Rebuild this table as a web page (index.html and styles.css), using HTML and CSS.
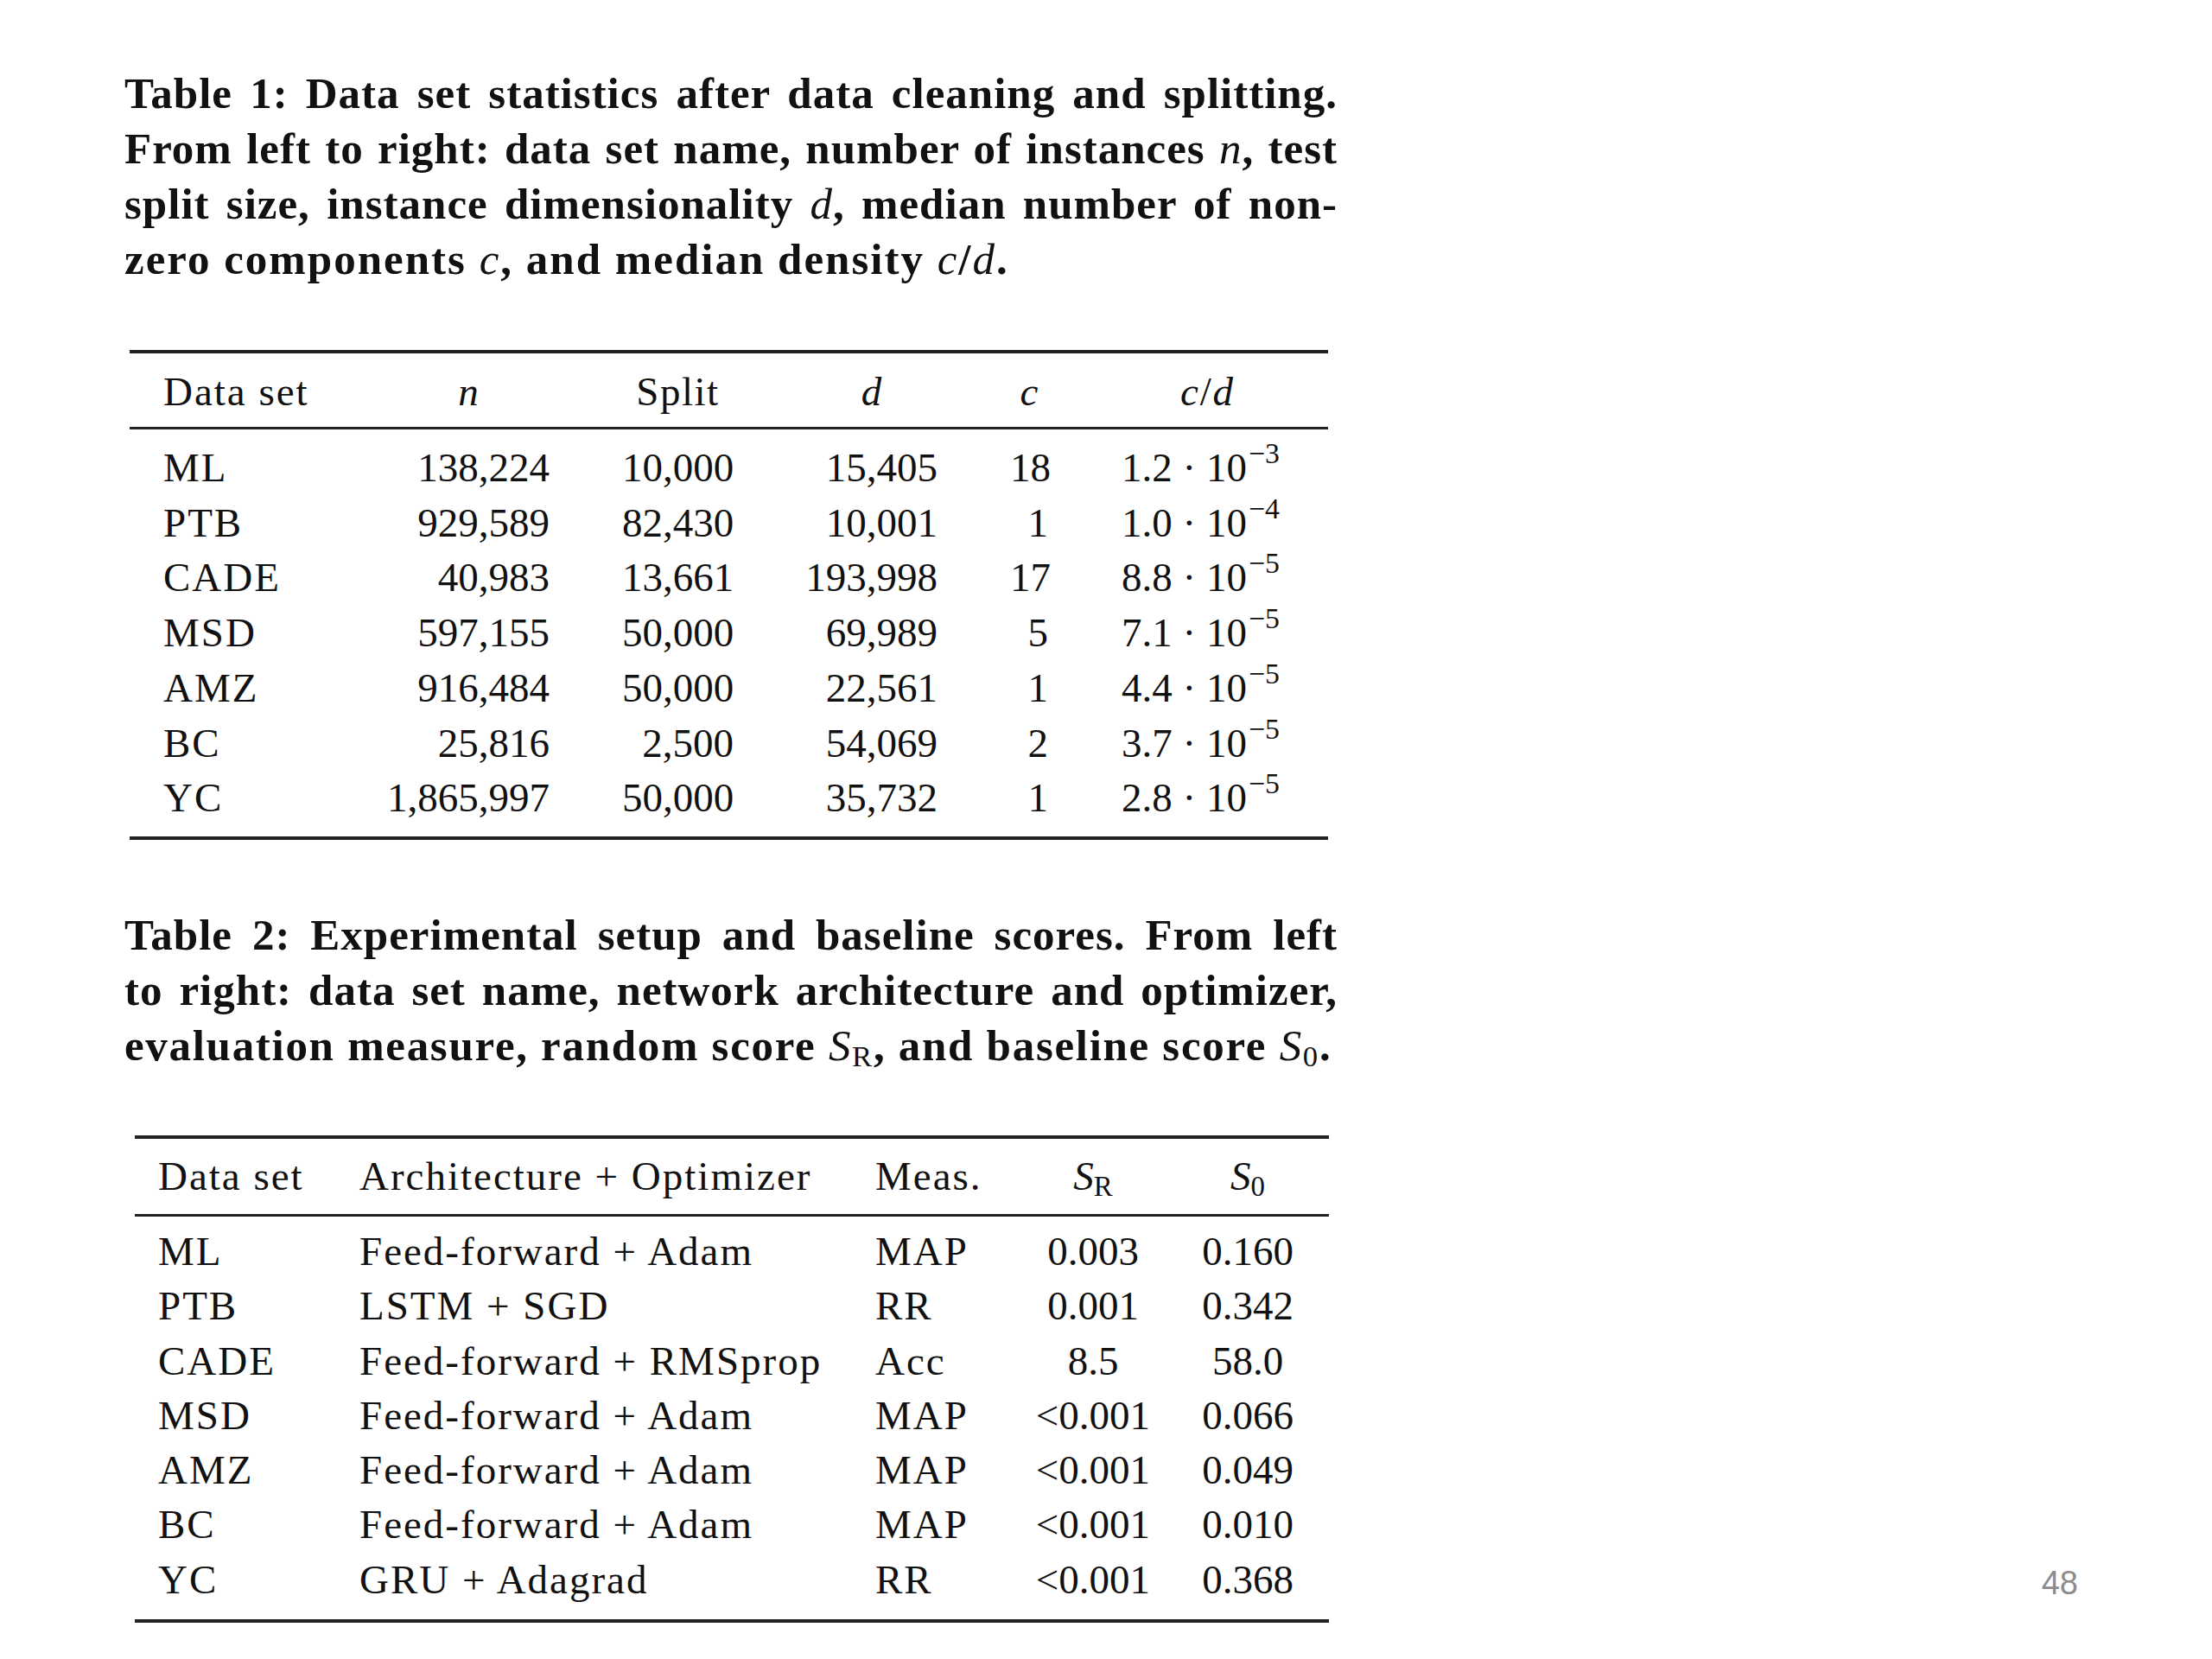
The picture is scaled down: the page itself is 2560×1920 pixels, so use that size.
FILE: index.html
```html
<!DOCTYPE html>
<html lang="en">
<head>
<meta charset="utf-8">
<title>Slide 48</title>
<link rel="stylesheet" href="styles.css">
</head>
<body>
<div class="slide">
  <main class="content">
    <p class="caption cap1">
      <span class="ln">Table 1: Data set statistics after data cleaning and splitting.</span>
      <span class="ln">From left to right: data set name, number of instances <i class="m">n</i>, test</span>
      <span class="ln">split size, instance dimensionality <i class="m">d</i>, median number of non-</span>
      <span class="ln last">zero components <i class="m">c</i>, and median density <i class="m">c</i>/<i class="m">d</i>.</span>
    </p>
    <table class="tbl t1">
      <thead>
        <tr><th>Data set</th><th><i>n</i></th><th>Split</th><th><i>d</i></th><th><i>c</i></th><th><i>c</i> / <i>d</i></th></tr>
      </thead>
      <tbody>
        <tr class="first"><td>ML</td><td>138,224</td><td>10,000</td><td>15,405</td><td>18</td><td>1.2 · 10<sup>−3</sup></td></tr>
        <tr><td>PTB</td><td>929,589</td><td>82,430</td><td>10,001</td><td>1</td><td>1.0 · 10<sup>−4</sup></td></tr>
        <tr><td>CADE</td><td>40,983</td><td>13,661</td><td>193,998</td><td>17</td><td>8.8 · 10<sup>−5</sup></td></tr>
        <tr><td>MSD</td><td>597,155</td><td>50,000</td><td>69,989</td><td>5</td><td>7.1 · 10<sup>−5</sup></td></tr>
        <tr><td>AMZ</td><td>916,484</td><td>50,000</td><td>22,561</td><td>1</td><td>4.4 · 10<sup>−5</sup></td></tr>
        <tr><td>BC</td><td>25,816</td><td>2,500</td><td>54,069</td><td>2</td><td>3.7 · 10<sup>−5</sup></td></tr>
        <tr class="last"><td>YC</td><td>1,865,997</td><td>50,000</td><td>35,732</td><td>1</td><td>2.8 · 10<sup>−5</sup></td></tr>
      </tbody>
    </table>
    <p class="caption cap2">
      <span class="ln">Table 2: Experimental setup and baseline scores. From left</span>
      <span class="ln">to right: data set name, network architecture and optimizer,</span>
      <span class="ln last">evaluation measure, random score <i class="m">S</i><sub>R</sub>, and baseline score <i class="m">S</i><sub>0</sub>.</span>
    </p>
    <table class="tbl t2">
      <thead>
        <tr><th>Data set</th><th>Architecture + Optimizer</th><th>Meas.</th><th><i>S</i><sub>R</sub></th><th><i>S</i><sub>0</sub></th></tr>
      </thead>
      <tbody>
        <tr class="first"><td>ML</td><td>Feed-forward + Adam</td><td>MAP</td><td>0.003</td><td>0.160</td></tr>
        <tr><td>PTB</td><td>LSTM + SGD</td><td>RR</td><td>0.001</td><td>0.342</td></tr>
        <tr><td>CADE</td><td>Feed-forward + RMSprop</td><td>Acc</td><td>8.5</td><td>58.0</td></tr>
        <tr><td>MSD</td><td>Feed-forward + Adam</td><td>MAP</td><td>&lt;0.001</td><td>0.066</td></tr>
        <tr><td>AMZ</td><td>Feed-forward + Adam</td><td>MAP</td><td>&lt;0.001</td><td>0.049</td></tr>
        <tr><td>BC</td><td>Feed-forward + Adam</td><td>MAP</td><td>&lt;0.001</td><td>0.010</td></tr>
        <tr class="last"><td>YC</td><td>GRU + Adagrad</td><td>RR</td><td>&lt;0.001</td><td>0.368</td></tr>
      </tbody>
    </table>
  </main>
  <div class="pagenum">48</div>
</div>
</body>
</html>
```
FILE: styles.css
```css
html, body {
  margin: 0;
  padding: 0;
  background: #ffffff;
}

.slide {
  width: 2560px;
  height: 1920px;
  box-sizing: border-box;
  padding: 76px 155px 0 144px;
  display: flex;
  color: #111111;
}

.content {
  width: 1404px;
  display: flex;
  flex-direction: column;
  align-items: flex-start;
}

.caption {
  margin: 0;
  width: 1404px;
  font-family: "Liberation Serif", "Times New Roman", serif;
  font-weight: bold;
  font-size: 51px;
  line-height: 64px;
  letter-spacing: 1px;
}

.caption .ln {
  display: block;
  text-align: justify;
  text-align-last: justify;
}

.caption .ln.last {
  text-align-last: left;
}

.cap1 .ln.last {
  letter-spacing: 2px;
}

.cap2 .ln.last {
  letter-spacing: 1.7px;
}

.caption .m {
  font-weight: normal;
  font-style: italic;
}

.caption sub {
  font-weight: normal;
  font-size: 0.68em;
  line-height: 0;
  vertical-align: -0.2em;
}

.cap2 {
  margin-top: 78px;
}

/* tables */
.tbl {
  border-collapse: separate;
  border-spacing: 0;
  table-layout: fixed;
  border-top: 4px solid #222222;
  border-bottom: 4px solid #222222;
  font-family: "Liberation Serif", "Times New Roman", serif;
  font-size: 47px;
  color: #111111;
}

.tbl th {
  font-weight: normal;
  line-height: 64px;
  padding-top: 12px;
  padding-bottom: 9px;
  border-bottom: 3px solid #222222;
  white-space: nowrap;
  text-align: center;
}

.tbl td {
  white-space: nowrap;
  padding-top: 0;
  padding-bottom: 0;
}

.tbl sup {
  font-size: 0.72em;
  line-height: 0;
  vertical-align: 0.62em;
  margin-left: 2px;
}

.tbl sub {
  font-size: 0.7em;
  line-height: 0;
  vertical-align: -0.22em;
}

/* ---------- Table 1 ---------- */
.t1 {
  margin-top: 73px;
  margin-left: 6px;
  width: 1385px;
}

.t1 td {
  line-height: 63.7px;
  text-align: right;
}

.t1 tr.first td { padding-top: 13px; }
.t1 tr.last td { padding-bottom: 12px; }

.t1 th:nth-child(1), .t1 td:nth-child(1) {
  padding-left: 39px;
  width: 258px;
  text-align: left;
  letter-spacing: 2px;
}
.t1 th:nth-child(2), .t1 td:nth-child(2) {
  padding-left: 0;
  width: 188px;
}
.t1 th:nth-child(3), .t1 td:nth-child(3) {
  padding-left: 83px;
  width: 129px;
  padding-right: 2px;
}
.t1 th:nth-child(3) { letter-spacing: 1.5px; }
.t1 th:nth-child(4), .t1 td:nth-child(4) {
  padding-left: 81px;
  width: 153px;
  padding-right: 3px;
}
.t1 th:nth-child(5), .t1 td:nth-child(5) {
  padding-left: 81px;
  width: 44px;
  padding-right: 5px;
}
.t1 th:nth-child(6), .t1 td:nth-child(6) {
  padding-left: 82px;
  padding-right: 44px;
  width: 193px;
}
.t1 th:nth-child(6) {
  word-spacing: -10px;
}
.t1 td:nth-child(6) {
  text-align: left;
  padding-left: 80px;
  width: 195px;
}
.t1 th:nth-child(1) { text-align: left; }

/* ---------- Table 2 ---------- */
.t2 {
  margin-top: 72px;
  margin-left: 12px;
  width: 1375px;
}

.t2 th {
  padding-top: 11px;
  padding-bottom: 12px;
}

.t2 td {
  line-height: 63.3px;
}

.t2 tr.first td { padding-top: 9px; }
.t2 tr.last td { padding-bottom: 14px; }

.t2 th:nth-child(1), .t2 td:nth-child(1) {
  padding-left: 27px;
  width: 231px;
  text-align: left;
  letter-spacing: 2px;
}
.t2 th:nth-child(2), .t2 td:nth-child(2) {
  width: 595px;
  text-align: left;
  letter-spacing: 2px;
}
.t2 th:nth-child(3), .t2 td:nth-child(3) {
  width: 168px;
  text-align: left;
  letter-spacing: 2px;
}
.t2 th:nth-child(4), .t2 td:nth-child(4) {
  width: 164px;
  text-align: center;
}
.t2 th:nth-child(5), .t2 td:nth-child(5) {
  padding-left: 36px;
  padding-right: 34px;
  width: 120px;
  text-align: center;
}

/* page number */
.pagenum {
  margin-left: auto;
  align-self: flex-end;
  margin-bottom: 69px;
  font-family: "Liberation Sans", Arial, sans-serif;
  font-size: 38px;
  line-height: 38px;
  color: #8c8c8c;
}
```
